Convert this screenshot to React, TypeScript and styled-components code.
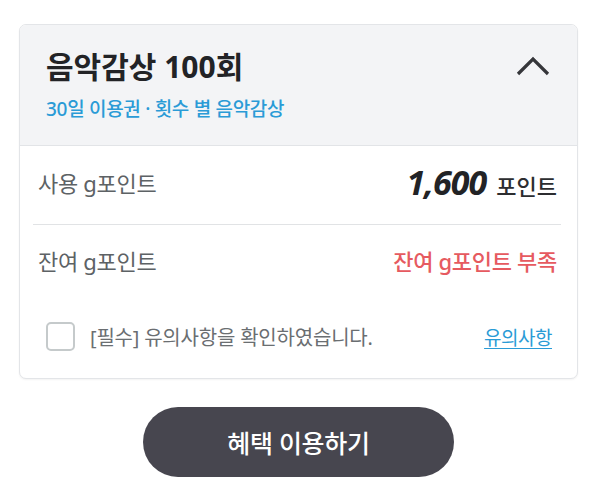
import React from "react";
import styled, { createGlobalStyle } from "styled-components";

const Global = createGlobalStyle`
  html, body { margin: 0; padding: 0; background: #fff; }
  body { font-family: "Noto Sans", "Noto Sans CJK KR", sans-serif; -webkit-font-smoothing: antialiased; }
`;

const Page = styled.div`
  width: 559px;
  padding: 24px 15px 0 19px;
  display: flex;
  flex-direction: column;
  align-items: center;
`;

const Card = styled.section`
  width: 100%;
  box-sizing: border-box;
  border: 1px solid #e3e5e8;
  border-radius: 7px;
  overflow: hidden;
  background: #fff;
  box-shadow: 0 1px 2px rgba(0, 0, 0, 0.05);
`;

const Header = styled.header`
  background: #f3f4f6;
  border-bottom: 1px solid #e2e4e7;
  padding: 23px 26px 23px 26px;
  display: flex;
  align-items: flex-start;
  justify-content: space-between;
`;

const HeadText = styled.div`
  display: flex;
  flex-direction: column;
  gap: 10px;
`;

const Title = styled.h2`
  margin: 0;
  font-size: 30px;
  line-height: 38px;
  font-weight: 700;
  color: #222326;
`;

const Sub = styled.p`
  margin: 0;
  font-size: 19px;
  line-height: 26px;
  font-weight: 500;
  color: #2a9bd6;
  letter-spacing: -0.3px;
`;

const Toggle = styled.button`
  border: 0;
  background: transparent;
  padding: 0;
  margin-top: 6px;
  width: 36px;
  height: 24px;
  cursor: pointer;
  display: flex;
`;

const Body = styled.div`
  padding: 0 16px 0 13px;
  display: flex;
  flex-direction: column;
`;

const Row = styled.div<{ $h: number; $line?: boolean; $inset?: number }>`
  height: ${(p) => p.$h}px;
  box-sizing: border-box;
  display: flex;
  align-items: center;
  justify-content: space-between;
  padding: 0 ${(p) => p.$inset ?? 4}px 6px ${(p) => (p.$inset ? 13 : 5)}px;
  border-bottom: ${(p) => (p.$line ? "1px solid #e1e3e5" : "0")};
`;

const Label = styled.span`
  font-size: 22px;
  color: #5d6265;
  letter-spacing: -0.3px;
`;

const Amount = styled.span`
  display: flex;
  align-items: baseline;
  gap: 10px;
`;

const Number = styled.b`
  font-family: "Noto Sans", "Open Sans", sans-serif;
  font-size: 34px;
  font-weight: 700;
  font-style: italic;
  color: #222326;
  letter-spacing: -1px;
`;

const Unit = styled.span`
  font-size: 22px;
  font-weight: 500;
  color: #2c2d30;
`;

const Warn = styled.span`
  font-size: 22px;
  font-weight: 500;
  color: #e65a60;
  letter-spacing: -0.3px;
`;

const Agree = styled.label`
  display: flex;
  align-items: center;
  gap: 15px;
  cursor: pointer;
`;

const Box = styled.span`
  width: 29px;
  height: 29px;
  box-sizing: border-box;
  border: 2px solid #c5cacb;
  border-radius: 5px;
  background: #fff;
`;

const AgreeText = styled.span`
  font-size: 20px;
  color: #6a6e71;
  letter-spacing: -0.2px;
`;

const Link = styled.a`
  font-size: 19px;
  color: #2a9bd6;
  text-decoration: underline;
  text-underline-offset: 3px;
  letter-spacing: -0.5px;
`;

const Cta = styled.button`
  margin-top: 28px;
  width: 311px;
  height: 70px;
  border: 0;
  border-radius: 35px;
  background: #47464f;
  color: #fff;
  font-family: "Noto Sans", "Noto Sans CJK KR", sans-serif;
  font-size: 25px;
  font-weight: 500;
  letter-spacing: -0.3px;
  cursor: pointer;
`;

export default function App() {
  return (
    <>
      <Global />
      <Page>
        <Card>
          <Header>
            <HeadText>
              <Title>음악감상 100회</Title>
              <Sub>30일 이용권 · 횟수 별 음악감상</Sub>
            </HeadText>
            <Toggle aria-label="접기">
              <svg width="36" height="24" viewBox="0 0 36 24">
                <path d="M3 20 L18 5 L33 20" fill="none" stroke="#35363a" strokeWidth="3.2" />
              </svg>
            </Toggle>
          </Header>
          <Body>
            <Row $h={79} $line>
              <Label>사용 g포인트</Label>
              <Amount>
                <Number>1,600</Number>
                <Unit>포인트</Unit>
              </Amount>
            </Row>
            <Row $h={76}>
              <Label>잔여 g포인트</Label>
              <Warn>잔여 g포인트 부족</Warn>
            </Row>
            <Row $h={77} $inset={9}>
              <Agree>
                <Box />
                <AgreeText>[필수] 유의사항을 확인하였습니다.</AgreeText>
              </Agree>
              <Link href="#">유의사항</Link>
            </Row>
          </Body>
        </Card>
        <Cta>혜택 이용하기</Cta>
      </Page>
    </>
  );
}
